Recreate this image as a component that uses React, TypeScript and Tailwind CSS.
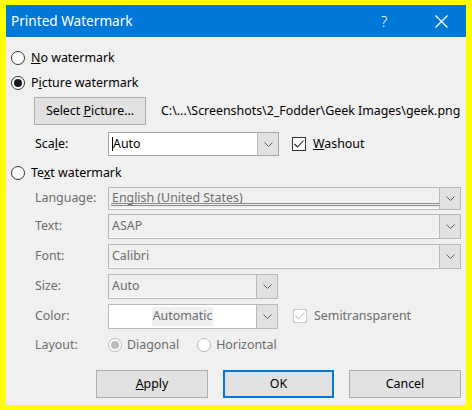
import React from "react";

const F = { fontFamily: '"Noto Sans", "Open Sans", sans-serif' };

function Chevron({ color = "#606060" }: { color?: string }) {
  return (
    <svg width="9" height="5" viewBox="0 0 9 5">
      <path d="M0.5 0.5 L4.5 4.5 L8.5 0.5" fill="none" stroke={color} strokeWidth="1" />
    </svg>
  );
}

function Radio({ checked, disabled }: { checked?: boolean; disabled?: boolean }) {
  const ring = disabled ? "border-[#bcbcbc]" : "border-[#333333]";
  return (
    <span className={`w-[14px] h-[14px] rounded-full border ${ring} bg-white flex items-center justify-center shrink-0`}>
      {checked && (
        <span className={`w-[8px] h-[8px] rounded-full ${disabled ? "bg-[#bcbcbc]" : "bg-[#1a1a1a]"}`} />
      )}
    </span>
  );
}

function Check({ disabled }: { disabled?: boolean }) {
  const c = disabled ? "#c8c8c8" : "#222222";
  return (
    <span className={`w-[14px] h-[14px] border ${disabled ? "border-[#cccccc]" : "border-[#333333]"} bg-white flex items-center justify-center shrink-0`}>
      <svg width="12" height="12" viewBox="0 0 12 12">
        <path d="M1.5 6 L4.5 9 L10.5 2.5" fill="none" stroke={c} strokeWidth="1.1" />
      </svg>
    </span>
  );
}

function Combo({
  width,
  height = 25,
  text,
  enabled,
  white,
  center,
  underline,
  highlight,
  cursor,
}: {
  width: number;
  height?: number;
  text: string;
  enabled?: boolean;
  white?: boolean;
  center?: boolean;
  underline?: boolean;
  highlight?: boolean;
  cursor?: boolean;
}) {
  return (
    <div
      className={`flex border ${enabled ? "border-[#a5a5a5]" : "border-[#b8b8b8]"} ${white ? "bg-white" : "bg-[#f0f0f0]"}`}
      style={{ width, height }}
    >
      <div className={`relative flex-1 flex items-center ${center ? "justify-center" : "pl-[3px]"} ${!white ? "border-b border-white" : ""}`}>
        {cursor && <span className="w-[1px] h-[14px] bg-black" />}
        <span
          className={`text-[12.4px] leading-none ${enabled ? "text-black" : "text-[#6d6d6d]"} ${highlight ? "bg-[#f0f0f0] px-[1px] py-[3px]" : ""}`}
        >
          {text}
        </span>
        {underline && (
          <div className="absolute left-[2px] right-0 bottom-[2px] flex flex-col gap-[1px]">
            <div className="h-[1px] bg-[#8a8a8a]" />
            <div className="h-[1px] bg-[#8a8a8a]" />
          </div>
        )}
      </div>
      <div className="w-[21px] border-l border-[#b8b8b8] bg-[#e1e1e1] flex items-center justify-center">
        <Chevron />
      </div>
    </div>
  );
}

function Label({ children, disabled }: { children: React.ReactNode; disabled?: boolean }) {
  return (
    <div className={`w-[73px] text-[12.4px] ${disabled ? "text-[#6d6d6d]" : "text-black"}`}>{children}</div>
  );
}

function Button({ children, primary }: { children: React.ReactNode; primary?: boolean }) {
  return (
    <div
      className={`h-[28px] flex items-center justify-center bg-[#e1e1e1] text-[12.4px] text-black ${primary ? "border-2 border-[#0078d7] w-[111px]" : "border border-[#adadad] w-[112px]"}`}
    >
      <span>{children}</span>
    </div>
  );
}

export default function App() {
  return (
    <div className="w-[472px] h-[410px] bg-[#ffff00] pt-[5px] pl-[6px]" style={F}>
      <div className="w-[460px] h-[400px] bg-[#f0f0f0] flex flex-col">
        <div className="h-[32px] bg-[#0078d7] flex items-center text-white relative">
          <span className="ml-[5px] text-[13.6px]">Printed Watermark</span>
          <span className="absolute left-[375px] top-[5px] text-[15px] font-light">?</span>
          <svg className="absolute left-[429px] top-[10px]" width="13" height="13" viewBox="0 0 13 13">
            <path d="M0.5 0.5 L12.5 12.5 M12.5 0.5 L0.5 12.5" stroke="white" strokeWidth="1.2" />
          </svg>
        </div>

        <div className="flex flex-col pl-[5px] pt-[11px] text-[12.4px]">
          <div className="h-[20px] flex items-center gap-[6px]">
            <Radio />
            <span><u>N</u>o watermark</span>
          </div>
          <div className="h-[20px] mt-[5px] flex items-center gap-[6px]">
            <Radio checked />
            <span>P<u>i</u>cture watermark</span>
          </div>
          <div className="mt-[4px] ml-[23px] flex items-center">
            <div className="w-[112px] h-[28px] border border-[#adadad] bg-[#e1e1e1] flex items-center justify-center">
              <span>Select <u>P</u>icture...</span>
            </div>
            <span className="ml-[15px]">C:\...\Screenshots\2_Fodder\Geek Images\geek.png</span>
          </div>
          <div className="mt-[7px] ml-[24px] flex items-center h-[24px]">
            <Label>Sca<u>l</u>e:</Label>
            <Combo width={171} height={24} text="Auto" enabled white cursor />
            <div className="ml-[13px] flex items-center gap-[7px]">
              <Check />
              <span><u>W</u>ashout</span>
            </div>
          </div>
          <div className="h-[20px] mt-[7px] flex items-center gap-[6px]">
            <Radio />
            <span>Te<u>x</u>t watermark</span>
          </div>
          <div className="mt-[4px] ml-[24px] flex items-center">
            <Label disabled>Language:</Label>
            <Combo width={353} height={23} text="English (United States)" underline />
          </div>
          <div className="mt-[4px] ml-[24px] flex items-center">
            <Label disabled>Text:</Label>
            <Combo width={353} text="ASAP" />
          </div>
          <div className="mt-[5px] ml-[24px] flex items-center">
            <Label disabled>Font:</Label>
            <Combo width={353} text="Calibri" />
          </div>
          <div className="mt-[5px] ml-[24px] flex items-center">
            <Label disabled>Size:</Label>
            <Combo width={170} text="Auto" />
          </div>
          <div className="mt-[5px] ml-[24px] flex items-center">
            <Label disabled>Color:</Label>
            <Combo width={170} text="Automatic" white center highlight />
            <div className="ml-[15px] flex items-center gap-[7px]">
              <Check disabled />
              <span className="text-[#6d6d6d]">Semitransparent</span>
            </div>
          </div>
          <div className="mt-[6px] ml-[24px] h-[20px] flex items-center">
            <Label disabled>Layout:</Label>
            <div className="flex items-center gap-[5px]">
              <Radio checked disabled />
              <span className="text-[#6d6d6d]">Diagonal</span>
            </div>
            <div className="ml-[18px] flex items-center gap-[5px]">
              <Radio disabled />
              <span className="text-[#6d6d6d]">Horizontal</span>
            </div>
          </div>
          <div className="mt-[15px] flex justify-end gap-[15px] pr-[5px]">
            <Button><u>A</u>pply</Button>
            <Button primary>OK</Button>
            <Button>Cancel</Button>
          </div>
        </div>
      </div>
    </div>
  );
}
